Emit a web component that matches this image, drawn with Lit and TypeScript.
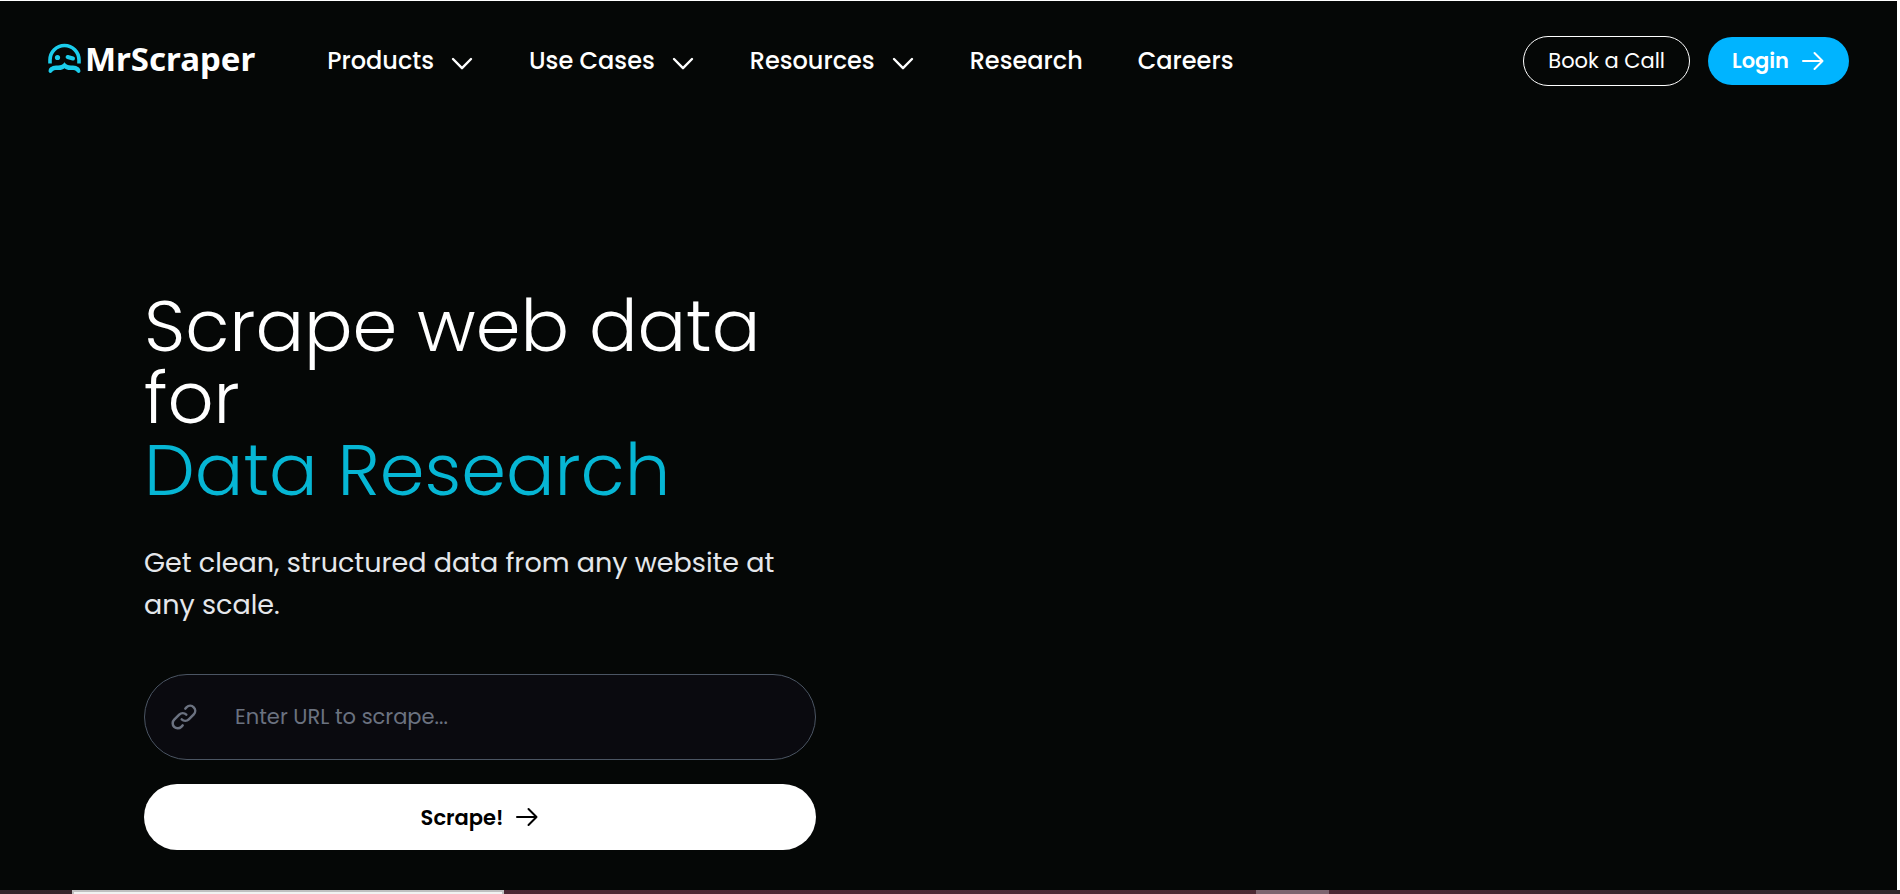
import { LitElement, html, css, svg } from "lit";
import { customElement } from "lit/decorators.js";

const chevron = html`<svg class="chevron" viewBox="0 0 24 24" aria-hidden="true">
  <path d="M3 8 L12 17.2 L21 8" />
</svg>`;

const arrow = html`<svg class="arrow" viewBox="0 0 24 24" aria-hidden="true">
  <path d="M2 12 H21.5 M13.5 4 L21.5 12 L13.5 20" />
</svg>`;

const logoMark = svg`
  <path class="line" d="M2 20.5 V17 A14.5 14.500 0 0 1 31 17 V20.5" />
  <circle class="fill" cx="9.5" cy="14.500" r="2.6" />
  <path class="line thick" d="M19.6 14 L25 15.500" />
  <path class="fill" d="M16.5 19.3 C18 21.6 20 22.6 23 22.6 C28.500 22.6 31.600 24 32.400 27.400 C32.900 29.800 30.200 30.800 29 28.900 C27.600 26.900 25 26.900 22 27 C19.600 27 17.800 26.300 16.500 25.200 C15.200 26.300 13.400 27 11 27 C8 26.900 5.400 26.900 4 28.900 C2.800 30.800 0.100 29.800 0.600 27.400 C1.400 24 4.500 22.600 10 22.600 C13 22.600 15 21.600 16.500 19.300 Z" />
`;

const links = [
  { label: "Products", menu: true },
  { label: "Use Cases", menu: true },
  { label: "Resources", menu: true },
  { label: "Research", menu: false },
  { label: "Careers", menu: false },
];

@customElement("app-root")
export class AppRoot extends LitElement {
  static styles = css`
    :host {
      display: flex;
      flex-direction: column;
      min-height: 100vh;
      background: #fff;
      color: #fff;
      font-family: Poppins, Inter, "Open Sans", sans-serif;
    }
    * {
      box-sizing: border-box;
    }
    a {
      color: inherit;
      text-decoration: none;
    }
    button {
      border: 0;
      padding: 0;
      background: none;
      color: inherit;
      font: inherit;
      cursor: pointer;
    }
    svg {
      flex: none;
      fill: none;
      stroke: currentColor;
      stroke-width: 2;
      stroke-linecap: round;
      stroke-linejoin: round;
    }
    .page {
      flex: 1;
      margin: 1px 3px 0 0;
      background: #050706;
    }
    .header {
      display: flex;
      align-items: center;
      padding: 35px 48px 0;
    }
    .logo {
      display: flex;
      align-items: center;
      gap: 4px;
      margin-right: 72px;
      padding-bottom: 4px;
      font: 700 33px/46px "Noto Sans", "Open Sans", sans-serif;
    }
    .mark {
      width: 33px;
      height: 33px;
    }
    .line {
      stroke: #1bcdec;
      stroke-width: 3.6;
      stroke-linecap: butt;
    }
    .thick {
      stroke-width: 4;
      stroke-linecap: round;
    }
    .fill {
      fill: #1bcdec;
      stroke: none;
    }
    .nav {
      display: flex;
      flex: 1;
      gap: 55px;
      font-size: 24px;
      font-weight: 500;
      line-height: 36px;
    }
    .item {
      display: flex;
      align-items: center;
      gap: 16px;
      white-space: nowrap;
    }
    .chevron,
    .arrow {
      width: 24px;
      height: 24px;
    }
    .chevron {
      margin-top: 4px;
      stroke-width: 2.4;
    }
    .actions {
      display: flex;
      align-items: center;
      gap: 18px;
      font-size: 21px;
      line-height: 32px;
      white-space: nowrap;
    }
    .call {
      border: 1px solid #fff;
      border-radius: 25px;
      padding: 8px 24px;
    }
    .login {
      display: flex;
      align-items: center;
      gap: 12px;
      border-radius: 24px;
      padding: 8px 24px;
      background: #00b4ff;
      font-weight: 600;
    }
    .hero {
      width: min(672px, 100% - 288px);
      margin: 204px 0 36px 144px;
    }
    h1 {
      margin: 0;
      font-size: 72px;
      font-weight: 300;
      line-height: 72px;
    }
    .topic {
      color: #06b6d4;
    }
    .lead {
      margin: 36px 0 48px;
      color: #e5e7eb;
      font-size: 27px;
      line-height: 42px;
    }
    .form {
      display: flex;
      flex-direction: column;
      gap: 24px;
    }
    .field {
      display: flex;
      align-items: center;
      gap: 36px;
      height: 86px;
      padding: 0 24px;
      border: 1px solid #4b5563;
      border-radius: 43px;
      background: #0a0a0f;
      color: #6b7280;
    }
    .link {
      width: 30px;
      height: 30px;
    }
    input {
      flex: 1;
      min-width: 0;
      border: 0;
      padding: 0;
      outline: 0;
      background: none;
      color: #fff;
      font: inherit;
      font-size: 21px;
      line-height: 32px;
    }
    input::placeholder {
      color: #6b7280;
      opacity: 1;
    }
    .submit {
      display: flex;
      align-items: center;
      justify-content: center;
      gap: 12px;
      height: 66px;
      border-radius: 33px;
      background: #fff;
      color: #000;
      font-size: 21px;
      font-weight: 600;
    }
    .dock {
      display: grid;
      grid-template-columns: 72fr 432fr 752fr 73fr 571fr;
      height: 4px;
      background: linear-gradient(90deg, #33242a, #4e2733 30%, #4b2834 75%, #33242a 88%, #31252a);
    }
    .window {
      grid-column: 2;
      border: 2px solid #c0bfc0;
      border-bottom: 0;
      background: #f2f2f2;
    }
    .tab {
      grid-column: 4;
      background: #7e6470;
    }
  `;

  render() {
    return html`
      <div class="page">
        <header class="header">
          <a class="logo" href="#">
            <svg class="mark" viewBox="0 0 33 33" aria-hidden="true">${logoMark}</svg>
            <span>MrScraper</span>
          </a>
          <nav class="nav">
            ${links.map((l) =>
              l.menu
                ? html`<button class="item" type="button">${l.label}${chevron}</button>`
                : html`<a class="item" href="#">${l.label}</a>`
            )}
          </nav>
          <div class="actions">
            <a class="call" href="#">Book a Call</a>
            <a class="login" href="#">Login${arrow}</a>
          </div>
        </header>
        <main class="hero">
          <h1>Scrape web data for<br /><span class="topic">Data Research</span></h1>
          <p class="lead">Get clean, structured data from any website at any scale.</p>
          <form class="form" @submit=${(e: Event) => e.preventDefault()}>
            <label class="field">
              <svg class="link" viewBox="0 0 24 24" aria-hidden="true">
                <path d="M13.828 10.172a4 4 0 0 0-5.656 0l-4 4a4 4 0 1 0 5.656 5.656l1.102-1.101m-.758-4.899a4 4 0 0 0 5.656 0l4-4a4 4 0 0 0-5.656-5.656l-1.1 1.1" />
              </svg>
              <input type="text" aria-label="URL to scrape" placeholder="Enter URL to scrape..." />
            </label>
            <button class="submit" type="submit">Scrape!${arrow}</button>
          </form>
        </main>
      </div>
      <div class="dock"><span class="window"></span><span class="tab"></span></div>
    `;
  }
}
